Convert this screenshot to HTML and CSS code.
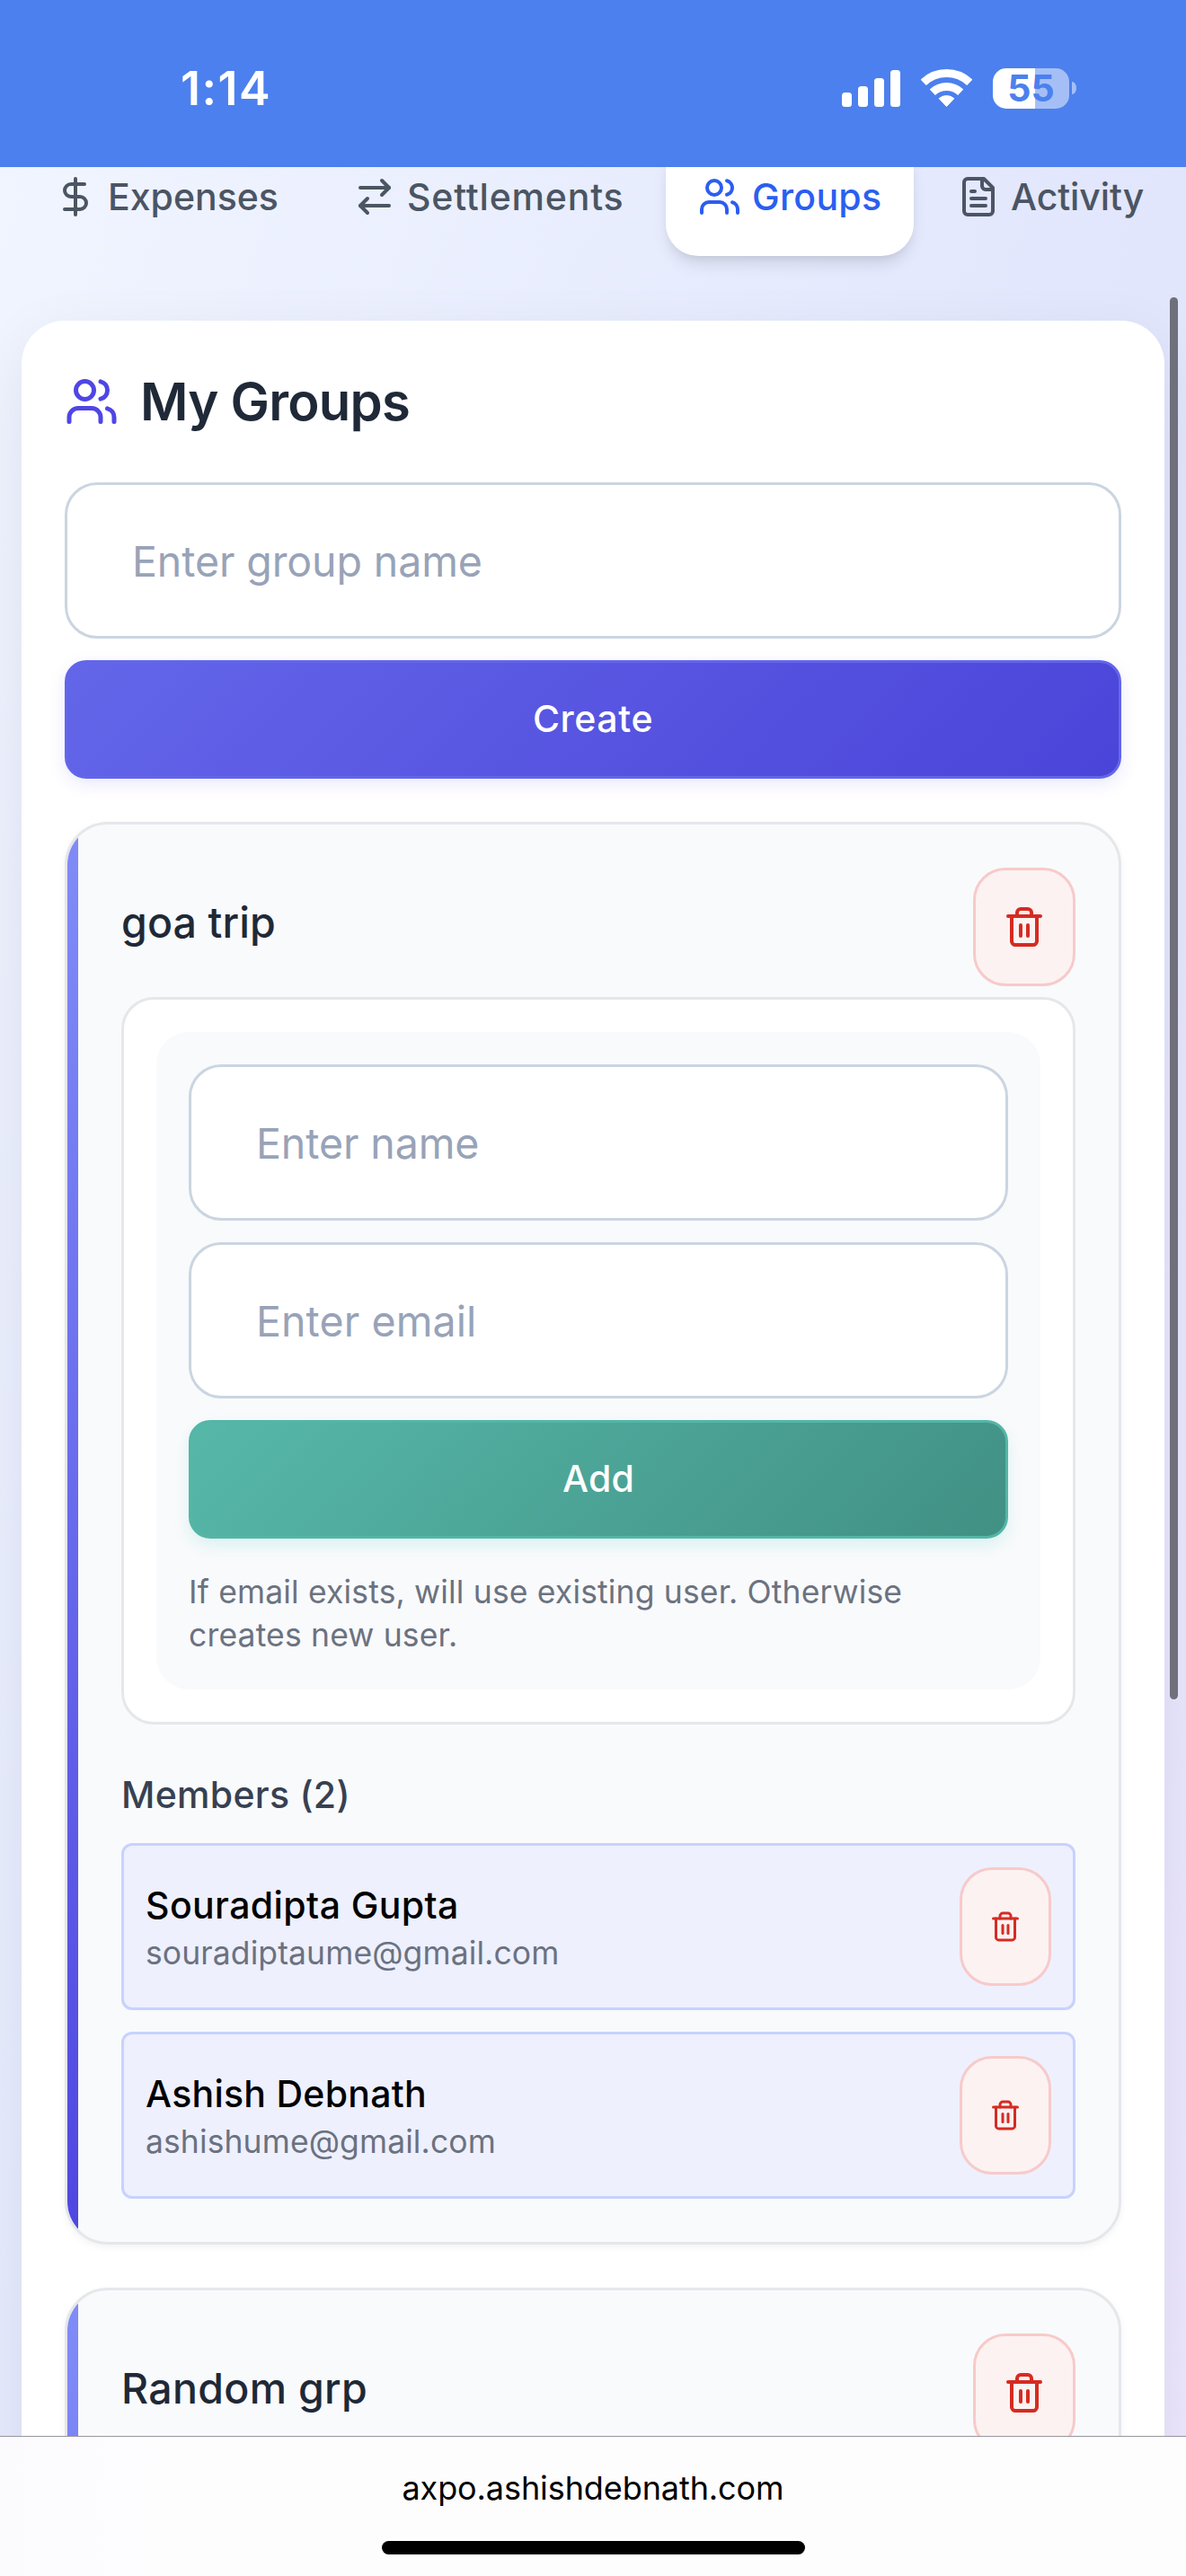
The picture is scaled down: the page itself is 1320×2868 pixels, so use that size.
FILE: index.html
```html
<!DOCTYPE html>
<html lang="en">
<head>
<meta charset="utf-8">
<title>My Groups</title>
<link rel="stylesheet" href="styles.css">
</head>
<body>
<svg class="sprite" aria-hidden="true">
  <symbol id="users" viewBox="0 0 24 24"><path d="M16 21v-2a4 4 0 0 0-4-4H6a4 4 0 0 0-4 4v2"/><circle cx="9" cy="7" r="4"/><path d="M22 21v-2a4 4 0 0 0-3-3.87"/><path d="M16 3.13a4 4 0 0 1 0 7.75"/></symbol>
  <symbol id="dollar" viewBox="0 0 24 24"><path d="M12 2v20"/><path d="M17 5H9.500a3.500 3.500 0 0 0 0 7h5a3.500 3.500 0 0 1 0 7H6"/></symbol>
  <symbol id="arrows" viewBox="0 0 24 24"><path d="m16 3 4 4-4 4"/><path d="M20 7H4"/><path d="m8 21-4-4 4-4"/><path d="M4 17h16"/></symbol>
  <symbol id="file" viewBox="0 0 24 24"><path d="M15 2H6a2 2 0 0 0-2 2v16a2 2 0 0 0 2 2h12a2 2 0 0 0 2-2V7Z"/><path d="M14 2v4a2 2 0 0 0 2 2h4"/><path d="M10 9H8"/><path d="M16 13H8"/><path d="M16 17H8"/></symbol>
  <symbol id="trash" viewBox="0 0 24 24"><path d="M3 6h18"/><path d="M19 6v14c0 1-1 2-2 2H7c-1 0-2-1-2-2V6"/><path d="M8 6V4c0-1 1-2 2-2h4c1 0 2 1 2 2v2"/><path d="M10 11v6"/><path d="M14 11v6"/></symbol>
</svg>

<header class="statusbar">
  <span class="clock">1:14</span>
  <div class="indicators">
    <svg class="signal" width="65" height="45" viewBox="0 0 65 45" fill="#fff">
      <rect x="0" y="27" width="11" height="16" rx="3.500"/>
      <rect x="18" y="20" width="11" height="23" rx="3.500"/>
      <rect x="36" y="11" width="11" height="32" rx="3.500"/>
      <rect x="54" y="2" width="11" height="41" rx="3.500"/>
    </svg>
    <svg class="wifi" width="57" height="45" viewBox="0 0 57 45" fill="none" stroke="#fff">
      <path stroke-width="9" d="M2.700 15.800a37.500 37.500 0 0 1 51.600 0"/>
      <path stroke-width="9" d="M12.800 26.800a22.800 22.800 0 0 1 31.400 0"/>
      <path fill="#fff" stroke-width="1" stroke-linejoin="round" d="M28.500 42.500l-8.300-8.800a12.500 12.500 0 0 1 16.600 0z"/>
    </svg>
    <div class="battery"><span class="level">55</span></div>
    <span class="nub"></span>
  </div>
</header>

<main class="page">
  <nav class="tabs">
    <a class="tab tab-expenses"><svg class="icon"><use href="#dollar"/></svg>Expenses</a>
    <a class="tab tab-settlements"><svg class="icon"><use href="#arrows"/></svg>Settlements</a>
    <a class="tab tab-groups active"><svg class="icon"><use href="#users"/></svg>Groups</a>
    <a class="tab tab-activity"><svg class="icon"><use href="#file"/></svg>Activity</a>
  </nav>

  <section class="panel">
    <h1 class="heading"><svg class="icon heading-icon"><use href="#users"/></svg>My Groups</h1>
    <form class="form">
      <input class="input" type="text" placeholder="Enter group name">
      <button class="btn btn-create" type="button">Create</button>
    </form>

    <article class="group">
      <div class="group-head">
        <h2 class="group-name">goa trip</h2>
        <button class="delete" type="button" aria-label="Delete group"><svg class="icon"><use href="#trash"/></svg></button>
      </div>
      <div class="add-box">
        <form class="add-form form">
          <input class="input" type="text" placeholder="Enter name">
          <input class="input input-email" type="text" placeholder="Enter email">
          <button class="btn btn-add" type="button">Add</button>
          <p class="hint">If email exists, will use existing user. Otherwise<br>creates new user.</p>
        </form>
      </div>
      <h3 class="members-title">Members (2)</h3>
      <ul class="members">
        <li class="member">
          <div class="member-info"><span class="member-name">Souradipta Gupta</span><span class="member-email">souradiptaume@gmail.com</span></div>
          <button class="delete delete-small" type="button" aria-label="Remove member"><svg class="icon"><use href="#trash"/></svg></button>
        </li>
        <li class="member">
          <div class="member-info"><span class="member-name member-name-b">Ashish Debnath</span><span class="member-email">ashishume@gmail.com</span></div>
          <button class="delete delete-small" type="button" aria-label="Remove member"><svg class="icon"><use href="#trash"/></svg></button>
        </li>
      </ul>
    </article>

    <article class="group group-next">
      <div class="group-head">
        <h2 class="group-name group-name-wide">Random grp</h2>
        <button class="delete" type="button" aria-label="Delete group"><svg class="icon"><use href="#trash"/></svg></button>
      </div>
    </article>
  </section>
  <div class="scrollbar"></div>
</main>

<footer class="browserbar">
  <span class="url">axpo.ashishdebnath.com</span>
  <span class="home"></span>
</footer>
</body>
</html>
```
FILE: styles.css
```css
* { box-sizing: border-box; }

body {
  margin: 0;
  width: 1320px;
  height: 2868px;
  overflow: hidden;
  display: flex;
  flex-direction: column;
  font-family: Inter, "Liberation Sans", sans-serif;
}

h1, h2, h3, p, ul { margin: 0; padding: 0; font-weight: 500; }
ul { list-style: none; }
button, input { font-family: inherit; margin: 0; outline: none; }

.sprite { display: none; }

.icon {
  width: 48px;
  height: 48px;
  flex: none;
  fill: none;
  stroke: currentColor;
  stroke-width: 2;
  stroke-linecap: round;
  stroke-linejoin: round;
}

/* Device status bar */
.statusbar {
  flex: none;
  height: 186px;
  padding: 10px 122px 0 201px;
  display: flex;
  align-items: center;
  justify-content: space-between;
  background: #4c80ee;
  color: #fff;
}
.clock { font-size: 52px; font-weight: 600; letter-spacing: 1.48px; }
.indicators { display: flex; align-items: center; height: 45px; }
.signal { margin-right: 23px; }
.wifi { margin-right: 23px; }
.battery {
  width: 85px;
  height: 45px;
  border-radius: 15px;
  background: linear-gradient(90deg, #fff 55%, #a5bff6 55%);
  display: flex;
  align-items: center;
  justify-content: center;
}
.level { color: #4c80ee; font-size: 41px; font-weight: 700; line-height: 45px; }
.nub { width: 5px; height: 14px; margin-left: 3px; border-radius: 0 5px 5px 0 / 0 7px 7px 0; background: #a5bff6; }

/* Scrolled page */
.page {
  position: relative;
  flex: 1;
  min-height: 0;
  overflow: hidden;
  padding: 0 24px;
  background: linear-gradient(to bottom right, #f1f5ff, #e1e6fd 50%, #f2e8fe) 0 -10px / 1320px 3700px no-repeat;
}

.tabs { display: flex; gap: 12px; margin-top: -33px; height: 132px; }
.tab {
  flex: none;
  display: flex;
  align-items: center;
  gap: 12px;
  padding: 0 36px;
  border-radius: 36px;
  color: #4b5563;
  font-size: 41px;
  font-weight: 500;
  white-space: nowrap;
}
.tab-expenses { width: 321px; }
.tab-settlements { width: 372px; letter-spacing: .8px; }
.tab-groups { width: 276px; letter-spacing: .3px; }
.tab-activity { letter-spacing: -.1px; }
.tab.active {
  background: #fff;
  color: #2b5ef0;
  box-shadow: 0 12px 18px -3px rgba(0, 0, 0, .1), 0 6px 12px -6px rgba(0, 0, 0, .1);
}

.panel {
  margin-top: 72px;
  padding: 48px;
  border-radius: 48px;
  background: #fff;
  box-shadow: 0 24px 72px rgba(15, 23, 42, .08);
}

.heading {
  display: flex;
  align-items: center;
  gap: 24px;
  height: 84px;
  margin-bottom: 48px;
  color: #1f2937;
  font-size: 58px;
  font-weight: 600;
  letter-spacing: -.74px;
}
.heading-icon { width: 60px; height: 60px; color: #4f46e5; }

.form { display: flex; flex-direction: column; gap: 24px; }
.input {
  width: 100%;
  height: 174px;
  padding: 2px 72px 0;
  border: 3px solid #cbd5e1;
  border-radius: 36px;
  background: #fff;
  font-size: 46.5px;
}
.input::placeholder { color: #98a3b8; opacity: 1; letter-spacing: -.1px; }
.input-email::placeholder { letter-spacing: .1px; }

.btn {
  height: 132px;
  padding: 0 0 2px;
  border: 3px solid;
  border-radius: 24px;
  color: #fff;
  font-size: 41px;
  font-weight: 500;
}
.btn-create {
  letter-spacing: .6px;
  border-color: #6366ea;
  background: linear-gradient(135deg, #6366e9, #4b44d9);
  box-shadow: 0 6px 18px rgba(99, 102, 241, .14);
}
.btn-add {
  letter-spacing: .25px;
  border-color: #54b6a6;
  background: linear-gradient(135deg, #56b8a9, #419084);
  box-shadow: 0 8px 18px rgba(20, 184, 166, .13);
}

.group {
  position: relative;
  overflow: hidden;
  margin-top: 48px;
  padding: 48px 48px 48px 60px;
  border: 3px solid #e5e7eb;
  border-radius: 48px;
  background: #f9fafc;
  box-shadow: 0 3px 9px rgba(0, 0, 0, .05);
}
.group::before {
  content: "";
  position: absolute;
  left: 0;
  top: 0;
  bottom: 0;
  width: 12px;
  background: linear-gradient(#818cf8, #4f46e0);
}
.group-next { height: 1584px; }
.group-head { display: flex; align-items: center; justify-content: space-between; height: 132px; }
.group-name { padding-bottom: 10px; color: #1f2937; font-size: 46.5px; letter-spacing: .1px; }
.group-name-wide { letter-spacing: .31px; }

.delete {
  flex: none;
  display: flex;
  align-items: center;
  justify-content: center;
  width: 114px;
  height: 132px;
  padding: 0;
  border: 3px solid #f7caca;
  border-radius: 36px;
  background: #fcf2f2;
  color: #d62b22;
}
.delete-small { width: 102px; }
.delete-small .icon { width: 36px; height: 36px; }

.add-box {
  margin-top: 12px;
  padding: 36px;
  border: 3px solid #e5e7eb;
  border-radius: 36px;
  background: #fff;
}
.add-form { padding: 36px; border-radius: 36px; background: #f9fafc; }
.hint {
  margin-top: 12px;
  color: #6b7280;
  font-size: 35.5px;
  font-weight: 400;
  line-height: 48px;
  letter-spacing: .16px;
}

.members-title {
  margin: 48px 0 24px;
  color: #374151;
  font-size: 41px;
  line-height: 60px;
  letter-spacing: .28px;
}
.members { display: flex; flex-direction: column; gap: 24px; font-weight: 400; }
.member {
  display: flex;
  align-items: center;
  justify-content: space-between;
  padding: 24px;
  border: 3px solid #c7d2fe;
  border-radius: 12px;
  background: #eef0fe;
}
.member-info { display: flex; flex-direction: column; }
.member-name { color: #000; font-size: 41px; font-weight: 500; line-height: 60px; letter-spacing: .4px; }
.member-name-b { letter-spacing: .26px; }
.member-email { color: #6b7280; font-size: 35.5px; line-height: 48px; letter-spacing: .1px; }

.scrollbar {
  position: absolute;
  left: 1302px;
  top: 145px;
  width: 9px;
  height: 1561px;
  border-radius: 5px;
  background: #706f7c;
}

/* Browser address bar */
.browserbar {
  flex: none;
  display: flex;
  flex-direction: column;
  align-items: center;
  height: 156px;
  border-top: 1px solid #98959c;
  background: linear-gradient(90deg, #fbfbfe, #fefdfe 15%);
}
.url { margin-top: 33px; color: #000; font-size: 36px; line-height: 48px; letter-spacing: -.09px; }
.home { width: 471px; height: 15px; margin-top: 35px; border-radius: 8px; background: #000; }
```
